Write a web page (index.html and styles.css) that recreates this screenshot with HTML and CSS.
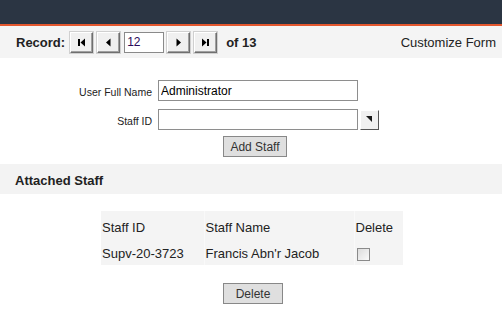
FILE: index.html
```html
<!DOCTYPE html>
<html>
<head>
<meta charset="utf-8">
<link rel="stylesheet" href="styles.css">
</head>
<body>
<div class="topbar"></div>
<div class="toolbar">
  <div class="record">
    <span class="record-label">Record:</span>
    <button class="navbtn"><svg width="9" height="9" viewBox="0 0 9 9"><rect x="1" y="1" width="2" height="7" fill="#000"/><polygon points="8,0.5 8,8.5 3.5,4.5" fill="#000"/></svg></button>
    <button class="navbtn"><svg width="9" height="9" viewBox="0 0 9 9"><polygon points="6.5,0.5 6.5,8.5 2,4.5" fill="#000"/></svg></button>
    <input class="recinput" type="text" value="12">
    <button class="navbtn"><svg width="9" height="9" viewBox="0 0 9 9"><polygon points="2.5,0.5 2.5,8.5 7,4.5" fill="#000"/></svg></button>
    <button class="navbtn"><svg width="9" height="9" viewBox="0 0 9 9"><polygon points="1,0.5 1,8.5 5.5,4.5" fill="#000"/><rect x="6" y="1" width="2" height="7" fill="#000"/></svg></button>
    <span class="of">of 13</span>
  </div>
  <span class="customize">Customize Form</span>
</div>
<div class="form">
  <div class="row">
    <label class="lbl">User Full Name</label>
    <input class="field" type="text" value="Administrator">
  </div>
  <div class="row">
    <label class="lbl">Staff ID</label>
    <input class="field" type="text" value="">
    <button class="dropbtn"><svg width="7" height="7" viewBox="0 0 7 7"><polygon points="0,0 6,0 6,6" fill="#1a1a1a"/></svg></button>
  </div>
  <div class="btnrow"><button class="btn add">Add Staff</button></div>
</div>
<div class="section">Attached Staff</div>
<div class="tablewrap">
  <table class="grid">
    <thead>
      <tr><th class="c1">Staff ID</th><th class="c2">Staff Name</th><th class="c3">Delete</th></tr>
    </thead>
    <tbody>
      <tr><td class="c1">Supv-20-3723</td><td class="c2">Francis Abn'r Jacob</td><td class="c3"><span class="chk"></span></td></tr>
    </tbody>
  </table>
</div>
<div class="btnrow2"><button class="btn del">Delete</button></div>
</body>
</html>
```
FILE: styles.css
```css
* { box-sizing: border-box; }
html, body { margin: 0; padding: 0; background: #fff; }
body { font-family: "Liberation Sans", Arial, sans-serif; color: #222; width: 502px; height: 311px; overflow: hidden; }
.topbar { background: #2b3543; border-bottom: 2px solid #e4572e; height: 26px; }
.toolbar { height: 32px; background: #f4f4f4; display: flex; align-items: center; justify-content: space-between; padding: 0 6px 0 16px; }
.record { display: flex; align-items: center; }
.record-label { font-size: 13px; font-weight: bold; margin-right: 5px; }
.navbtn { width: 23px; height: 21px; padding: 0; margin: 0 4px 0 0; background: #f0f0f0; border: 1px solid; border-color: #fff #6f6f6f #6f6f6f #fff; box-shadow: inset -1px -1px 0 #a0a0a0; display: flex; align-items: center; justify-content: center; outline: 1px solid #d0d0d0; }
.recinput { width: 40px; height: 21px; margin: 0 3px 0 0; padding: 0 2px; border: 1px solid #8a8a8a; font: 12px "Liberation Sans", Arial, sans-serif; color: #2a0a5a; background: #fff; }
.of { font-size: 13px; font-weight: bold; margin-left: 5px; }
.customize { font-size: 13px; color: #222; }
.form { padding: 22px 0 0 0; height: 105px; }
.row { display: flex; align-items: center; margin-bottom: 8px; }
.lbl { width: 158px; text-align: right; font-size: 10.5px; padding-right: 6px; padding-top: 2px; }
.field { width: 200px; height: 21px; border: 1px solid #8e8e8e; font: 12px "Liberation Sans", Arial, sans-serif; color: #000; padding: 0 2px; margin-left: 0; }
.dropbtn { width: 19px; height: 20px; margin-left: 2px; padding: 0; background: #f0f0f0; border: 1px solid; border-color: #fff #555 #555 #fff; display: flex; align-items: center; justify-content: center; }
.btnrow { display: flex; padding-left: 223px; margin-top: -2px; }
.btn { height: 21px; background: #dfdfdf; border: 1px solid #888; font: 12px "Liberation Sans", Arial, sans-serif; color: #333; padding: 0 6px; }
.add { width: 64px; }
.section { height: 30px; background: #f3f3f3; font-size: 13px; font-weight: bold; padding: 9px 0 0 15px; margin-top: 1px; }
.tablewrap { padding: 17px 0 0 101px; height: 89px; }
.grid { border-collapse: collapse; font-size: 13px; width: 302px; }
.grid th { font-weight: normal; text-align: left; height: 30px; background: #f4f4f4; color: #222; padding: 3px 0 0 1px; }
.grid td { height: 24px; background: #f4f4f4; padding: 0 0 0 1px; }
.grid .c1 { width: 103px; }
.grid .c2 { width: 150px; border-left: 1px solid #f9f9f9; }
.grid .c3 { border-left: 1px solid #f9f9f9; }
.chk { display: inline-block; width: 13px; height: 13px; border: 1px solid #8a8a8a; background: linear-gradient(135deg, #dcdcdc, #fafafa); vertical-align: middle; margin-left: 1px; }
.btnrow2 { display: flex; padding-left: 223px; }
.del { width: 60px; }
```
